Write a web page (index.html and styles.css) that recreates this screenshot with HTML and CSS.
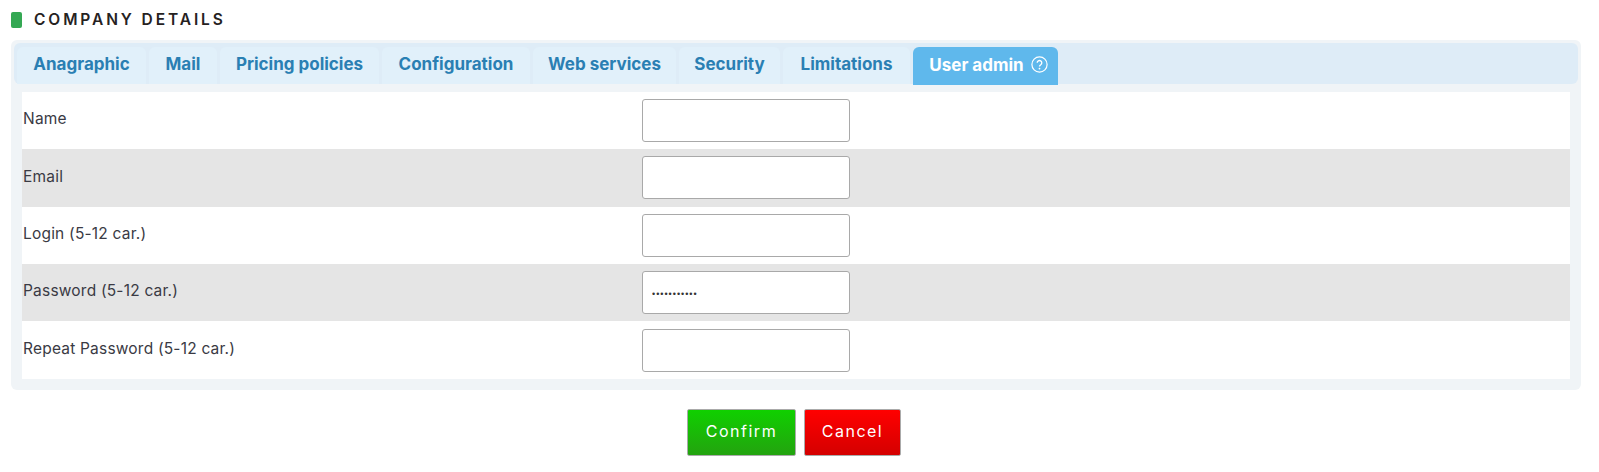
FILE: index.html
```html
<!DOCTYPE html>
<html lang="en">
<head>
  <meta charset="UTF-8">
  <title>Company details</title>
  <link rel="stylesheet" href="styles.css">
</head>
<body>
  <div class="title">
    <span class="marker"></span>
    <h2>COMPANY DETAILS</h2>
  </div>

  <div class="panel">
    <div class="tabs">
      <a class="tab t-ana">Anagraphic</a>
      <a class="tab t-mail">Mail</a>
      <a class="tab t-price">Pricing policies</a>
      <a class="tab t-conf">Configuration</a>
      <a class="tab t-web">Web services</a>
      <a class="tab t-sec">Security</a>
      <a class="tab t-lim">Limitations</a>
      <a class="tab active">User admin
        <svg class="help" width="17" height="17" viewBox="0 0 17 17" fill="none" stroke="#fff">
          <circle cx="8.5" cy="8.5" r="7.6" stroke-width="1.2"/>
          <path d="M6.2 6.8a2.3 2.3 0 1 1 3.5 2c-.8.4-1.2.9-1.2 1.7" stroke-width="1.3"/>
          <circle cx="8.5" cy="12.6" r=".9" fill="#fff" stroke="none"/>
        </svg>
      </a>
    </div>

    <div class="rows">
      <div class="row">
        <label>Name</label>
        <input type="text">
      </div>
      <div class="row">
        <label>Email</label>
        <input type="text">
      </div>
      <div class="row">
        <label>Login (5-12 car.)</label>
        <input type="text">
      </div>
      <div class="row">
        <label>Password (5-12 car.)</label>
        <input type="password" value="12345678901">
      </div>
      <div class="row">
        <label>Repeat Password (5-12 car.)</label>
        <input type="password">
      </div>
    </div>
  </div>

  <div class="buttons">
    <button class="btn confirm">Confirm</button>
    <button class="btn cancel">Cancel</button>
  </div>
</body>
</html>
```

FILE: styles.css
```css
:root {
  --tab: #e1f0fa;
  --tabbar: #deecf7;
  --panel: #f0f4f7;
  --link: #2a7fb3;
  --font: #3a3a44;
}

body {
  font-family: Inter, 'Open Sans', sans-serif;
  color: var(--font);
  background: #fff;
  margin: 0;
  padding: 12px 18px 16px 11px;
}

.title {
  display: flex;
  align-items: center;
  gap: 12px;
  height: 16px;
}

.marker {
  width: 11px;
  height: 16px;
  background: #34a853;
  border-radius: 2px;
}

h2 {
  margin: 0 0 2px;
  font-size: 15.5px;
  font-weight: 600;
  letter-spacing: 2.9px;
  color: #26221f;
}

.panel {
  margin-top: 12px;
  padding: 3px 3px 11px;
  background: var(--panel);
  border-radius: 6px;
}

.tabs {
  display: flex;
  align-items: flex-end;
  gap: 3px;
  height: 41px;
  padding-left: 3px;
  background: var(--tabbar);
  border-radius: 6px;
}

.tab {
  display: flex;
  align-items: center;
  justify-content: center;
  box-sizing: border-box;
  height: 37px;
  padding-bottom: 3px;
  font-size: 17px;
  font-weight: 700;
  color: var(--link);
  background: var(--tab);
  border-radius: 6px 6px 0 0;
}

.t-ana { width: 129px; }
.t-mail { width: 68px; }
.t-price { width: 159px; }
.t-conf { width: 148px; }
.t-web { width: 143px; }
.t-sec { width: 101px; }
.t-lim { width: 127px; }

.tab.active {
  width: 145px;
  height: 38px;
  margin-bottom: -1px;
  padding-left: 6px;
  gap: 7px;
  color: #fff;
  background: #5fb8ec;
}

.rows {
  margin: 8px 8px 0;
}

.row {
  display: grid;
  grid-template-columns: 620px 1fr;
  align-items: center;
  height: 57.35px;
  background: #fff;
}

.row:nth-child(even) {
  background: #e5e5e5;
}

.row label {
  padding: 0 0 4px 1px;
  font-size: 15.5px;
  letter-spacing: 0.2px;
}

.row input {
  align-self: start;
  box-sizing: border-box;
  width: 208px;
  height: 43px;
  margin-top: 7.14px;
  padding: 2px 9px 0;
  border: 1px solid #a9a9a9;
  border-radius: 3px;
  background: #fff;
  font-family: 'Liberation Sans', sans-serif;
  font-size: 9px;
  color: #333;
  letter-spacing: 1px;
}

.buttons {
  display: flex;
  gap: 8px;
  margin-top: 19px;
  padding-left: 676px;
}

.btn {
  height: 47px;
  padding: 0 0 2px;
  border: 1px solid #aaa;
  border-radius: 2px;
  font-family: Inter, 'Open Sans', sans-serif;
  font-size: 16px;
  letter-spacing: 1.5px;
  color: #fff;
}

.confirm {
  width: 109px;
  background: linear-gradient(#10d000, #23a30f);
}

.cancel {
  width: 97px;
  background: linear-gradient(#ff0000, #d40000);
}
```
